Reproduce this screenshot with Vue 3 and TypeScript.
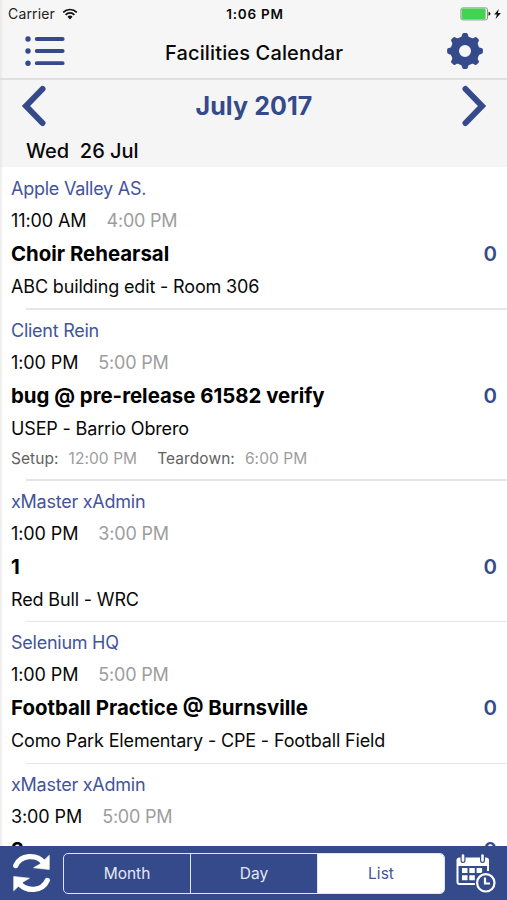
<script setup lang="ts">
interface FacilityEvent {
  owner: string
  start: string
  end: string
  title: string
  place?: string
  count: number
  setup?: string
  teardown?: string
}

const events: FacilityEvent[] = [
  { owner: 'Apple Valley AS.', start: '11:00 AM', end: '4:00 PM', title: 'Choir Rehearsal', place: 'ABC building edit - Room 306', count: 0 },
  { owner: 'Client Rein', start: '1:00 PM', end: '5:00 PM', title: 'bug @ pre-release 61582 verify', place: 'USEP - Barrio Obrero', count: 0, setup: '12:00 PM', teardown: '6:00 PM' },
  { owner: 'xMaster xAdmin', start: '1:00 PM', end: '3:00 PM', title: '1', place: 'Red Bull - WRC', count: 0 },
  { owner: 'Selenium HQ', start: '1:00 PM', end: '5:00 PM', title: 'Football Practice @ Burnsville', place: 'Como Park Elementary - CPE - Football Field', count: 0 },
  { owner: 'xMaster xAdmin', start: '3:00 PM', end: '5:00 PM', title: '2', count: 0 },
]

const views: string[] = ['Month', 'Day', 'List']
const activeView = 'List'
const gearAngles: number[] = [0, 45, 90, 135, 180, 225, 270, 315]
</script>

<template>
  <div class="phone">
    <div class="status">
      <div class="carrier">
        <span>Carrier</span>
        <svg width="16" height="12" viewBox="0 0 16 12" fill="none" stroke="#111" stroke-width="1.7">
          <path d="M1.2 4.3a9.6 9.6 0 0 1 13.6 0" />
          <path d="M3.6 6.8a6.2 6.2 0 0 1 8.8 0" />
          <path d="M8 11.4L5.5 8.7a3.6 3.6 0 0 1 5 0z" fill="#111" stroke="none" />
        </svg>
      </div>
      <div class="clock">1:06 PM</div>
      <div class="power">
        <svg width="42" height="14" viewBox="0 0 42 14">
          <rect x="0.9" y="0.9" width="26.6" height="12" rx="1.8" fill="#fff" stroke="#8d948d" stroke-width="1" />
          <rect x="1.6" y="1.6" width="24" height="10.6" rx="1" fill="#41d351" />
          <path d="M28.5 4.8q2 .6 2 2t-2 2z" fill="#222" />
          <path d="M38.8 2l-4.6 5.4h2.7L35.6 12l5.3-6h-3z" fill="#111" />
        </svg>
      </div>
    </div>

    <header class="nav">
      <svg width="40" height="32" viewBox="0 0 40 32" stroke="#354a8b" stroke-width="3.8" stroke-linecap="round" fill="#354a8b">
        <path d="M11.7 4h26M11.7 16h26M11.7 28.200h26" />
        <g stroke="none"><circle cx="3" cy="4" r="2.7" /><circle cx="3" cy="16" r="2.7" /><circle cx="3" cy="28.200" r="2.7" /></g>
      </svg>
      <h1>Facilities Calendar</h1>
      <svg width="36" height="36" viewBox="-18 -18 36 36">
        <circle r="10.200" fill="none" stroke="#354a8b" stroke-width="8.400" />
        <path v-for="a in gearAngles" :key="a" :transform="`rotate(${a})`" fill="#354a8b" d="M-5 -13Q-3.200 -14 -2.900 -16.200Q-2.700 -17.900 -1.300 -17.900H1.300Q2.700 -17.900 2.900 -16.200Q3.200 -14 5 -13z" />
      </svg>
    </header>

    <section class="period">
      <div class="month">
        <svg width="26" height="42" viewBox="0 0 26 42" fill="none" stroke="#354a8b" stroke-width="6" stroke-linecap="round"><path d="M21.500 4L5 21L21.500 38" /></svg>
        <h2>July 2017</h2>
        <svg width="26" height="42" viewBox="0 0 26 42" fill="none" stroke="#354a8b" stroke-width="6" stroke-linecap="round"><path d="M4.500 4L21 21L4.500 38" /></svg>
      </div>
      <div class="date">Wed&nbsp; 26 Jul</div>
    </section>

    <main class="list">
      <article v-for="(e, i) in events" :key="i" class="event">
        <div class="owner">{{ e.owner }}</div>
        <div class="times"><span>{{ e.start }}</span><span class="end">{{ e.end }}</span></div>
        <div class="heading"><strong>{{ e.title }}</strong><span class="count">{{ e.count }}</span></div>
        <div v-if="e.place" class="place">{{ e.place }}</div>
        <div v-if="e.setup" class="extra">
          <span>Setup:</span><span class="value">{{ e.setup }}</span>
          <span class="teardown">Teardown:</span><span class="value">{{ e.teardown }}</span>
        </div>
      </article>
    </main>

    <footer class="bar">
      <svg width="38" height="40" viewBox="0 0 38 40" fill="none" stroke="#fff" stroke-width="5.400">
        <path d="M3.800 12.500C8.500 1.800 24.500 0.500 32 10" stroke-linecap="round" />
        <path d="M37.300 2.200V16.500L21.500 14.800L28 11z" fill="#fff" stroke="#fff" stroke-width=".6" stroke-linejoin="round" />
        <path d="M35.200 27.500C30.500 38.200 14.500 39.500 7 30" stroke-linecap="round" />
        <path d="M1.700 37.800V23.500L17.500 25.200L11 29z" fill="#fff" stroke="#fff" stroke-width=".6" stroke-linejoin="round" />
      </svg>
      <div class="segments">
        <div v-for="v in views" :key="v" class="segment" :class="{ active: v === activeView }">{{ v }}</div>
      </div>
      <svg width="40" height="40" viewBox="0 0 40 40" fill="none" stroke="#fff">
        <path d="M2 5.500H31.500V13H2z" fill="#fff" stroke="none" />
        <path d="M20 31H3.500Q1.500 31 1.500 29V7.500Q1.500 5.500 3.500 5.500H30Q32 5.500 32 7.500V18" stroke-width="2" />
        <g stroke-linecap="round"><path d="M7 2.500V7.500M26.500 2.500V7.500" stroke="#354a8b" stroke-width="5" /><path d="M7 2.500V7.500M26.500 2.500V7.500" stroke-width="2.600" /></g>
        <g fill="#fff" stroke="none">
          <path d="M6 15h5.500v5h-5.500zM13.300 15h5.500v5h-5.500zM20.600 15h5.500v5h-5.500zM6 22.300h5.500v5h-5.500zM13.300 22.300h5.500v5h-5.500z" />
        </g>
        <circle cx="29.800" cy="29.800" r="11" fill="#354a8b" stroke="none" />
        <circle cx="29.800" cy="29.800" r="8.700" stroke-width="2.200" />
        <path d="M29 24.500V30.500H34" stroke-width="2.200" />
      </svg>
    </footer>
  </div>
</template>

<style>
body {
  margin: 0;
  background: #fff;
}
</style>

<style scoped>
.phone {
  box-sizing: border-box;
  width: 507px;
  height: 900px;
  display: flex;
  flex-direction: column;
  overflow: hidden;
  background: linear-gradient(to right, #e9e9e9, #fff 3px);
  color: #080808;
  font-family: Inter, 'Liberation Sans', sans-serif;
}
svg {
  display: block;
  flex: none;
}
h1,
h2 {
  margin: 0;
}
.status {
  height: 27px;
  flex: none;
  display: grid;
  grid-template-columns: 1fr auto 1fr;
  align-items: center;
  padding: 0 5px 0 8px;
  background: linear-gradient(to right, #e7e7e7, #f6f6f6 3px);
  font-size: 14px;
}
.carrier {
  display: flex;
  align-items: center;
  gap: 7px;
  color: #222;
  letter-spacing: 0.15px;
}
.clock {
  font-weight: 600;
  font-size: 13.500px;
  letter-spacing: 0.75px;
}
.power {
  display: flex;
  justify-content: flex-end;
}
.nav {
  height: 51px;
  flex: none;
  display: grid;
  grid-template-columns: 1fr auto 1fr;
  align-items: center;
  padding: 0 24px 3px 25px;
  box-sizing: border-box;
  background: linear-gradient(to right, #e7e7e7, #f6f6f6 3px);
}
.nav svg:last-child {
  justify-self: end;
}
h1 {
  padding-top: 3px;
  font-size: 20px;
  font-weight: 500;
  line-height: 28px;
  letter-spacing: 0.14px;
}
.period {
  height: 89px;
  box-sizing: border-box;
  flex: none;
  border-top: 2px solid #dfdfdf;
  background: linear-gradient(to right, #e7e7e7, #f5f5f5 3px);
}
.month {
  height: 52px;
  display: flex;
  align-items: center;
  justify-content: space-between;
  padding: 0 20px 0 21px;
}
h2 {
  color: #354a8b;
  font-size: 25px;
  font-weight: 700;
  letter-spacing: 0.1px;
}
.date {
  padding-left: 26px;
  font-size: 20px;
  font-weight: 500;
  line-height: 38px;
}
.list {
  flex: 1;
  min-height: 0;
  overflow: hidden;
}
.event {
  position: relative;
  padding: 6px 11px 5.700px;
  font-size: 18px;
}
.event::after {
  content: '';
  position: absolute;
  left: 26px;
  right: 0;
  bottom: -1px;
  height: 1.500px;
  background: #e6e6e6;
}
.owner {
  color: #43549a;
  line-height: 32px;
  letter-spacing: -0.25px;
}
.times {
  display: flex;
  gap: 20px;
  line-height: 32px;
  letter-spacing: -0.1px;
}
.end,
.value {
  color: #9d9d9d;
}
.end {
  letter-spacing: -0.2px;
}
.heading {
  display: flex;
  justify-content: space-between;
  font-size: 20.400px;
  line-height: 34px;
}
.heading strong {
  font-weight: 700;
  color: #000;
}
.count {
  margin-right: -1px;
  color: #354a8b;
  font-weight: 600;
}
.place {
  line-height: 32px;
  letter-spacing: -0.15px;
}
.extra {
  display: flex;
  gap: 10px;
  padding-bottom: 1.300px;
  font-size: 15.500px;
  line-height: 28px;
  letter-spacing: 0.07px;
  color: #626262;
}
.teardown {
  margin-left: 10px;
}
.bar {
  height: 54px;
  box-sizing: border-box;
  flex: none;
  display: flex;
  align-items: center;
  padding: 0 10px 0 12px;
  background: #354a8b;
}
.segments {
  width: 382px;
  height: 41px;
  box-sizing: border-box;
  margin: 0 11px 0 13px;
  display: flex;
  border: 1.500px solid #dfe5f5;
  border-radius: 5px;
  overflow: hidden;
}
.segment {
  flex: 1;
  display: flex;
  align-items: center;
  justify-content: center;
  color: #e3e8f5;
  font-size: 15.500px;
}
.segment + .segment {
  border-left: 1.500px solid #dfe5f5;
}
.segment.active {
  background: #fff;
  color: #43549a;
}
</style>
